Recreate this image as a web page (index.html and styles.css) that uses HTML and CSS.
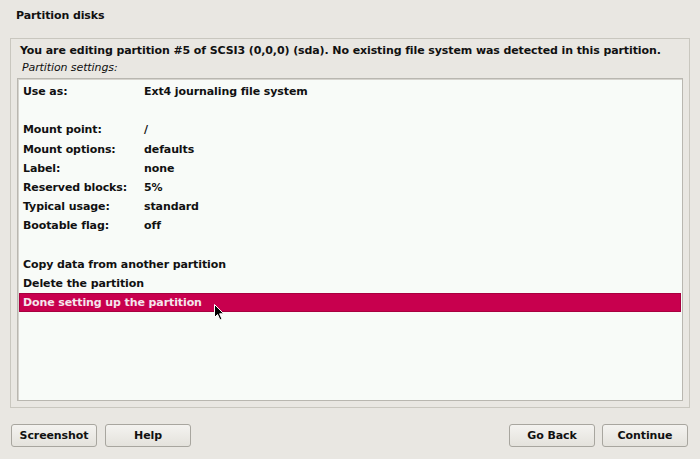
FILE: index.html
```html
<!DOCTYPE html>
<html>
<head>
<meta charset="utf-8">
<link rel="stylesheet" href="styles.css">
</head>
<body>
<div class="app">
  <div class="title">Partition disks</div>
  <div class="frame">
    <div class="question">You are editing partition #5 of SCSI3 (0,0,0) (sda). No existing file system was detected in this partition.</div>
    <div class="subtitle">Partition settings:</div>
    <div class="list">
      <div class="row"><span class="key">Use as:</span><span>Ext4 journaling file system</span></div>
      <div class="row"></div>
      <div class="row"><span class="key">Mount point:</span><span>/</span></div>
      <div class="row"><span class="key">Mount options:</span><span>defaults</span></div>
      <div class="row"><span class="key">Label:</span><span>none</span></div>
      <div class="row"><span class="key">Reserved blocks:</span><span>5%</span></div>
      <div class="row"><span class="key">Typical usage:</span><span>standard</span></div>
      <div class="row"><span class="key">Bootable flag:</span><span>off</span></div>
      <div class="row"></div>
      <div class="row">Copy data from another partition</div>
      <div class="row">Delete the partition</div>
      <div class="row selected">Done setting up the partition
        <svg class="cursor" width="12" height="18" viewBox="0 0 12 18"><path d="M0.5 0.5 L0.5 13.5 L3.5 10.5 L6 16 L8 15 L5.6 9.8 L9.8 9.8 Z" fill="#000" stroke="#fff" stroke-width="1"/></svg>
      </div>
    </div>
  </div>
  <div class="buttons">
    <div class="left">
      <button class="btn">Screenshot</button>
      <button class="btn">Help</button>
    </div>
    <div class="right">
      <button class="btn">Go Back</button>
      <button class="btn">Continue</button>
    </div>
  </div>
</div>
</body>
</html>
```
FILE: styles.css
```css
html, body {
  margin: 0;
  padding: 0;
  background: #e9e7e2;
}
body {
  font-family: "DejaVu Sans", sans-serif;
  font-size: 11px;
  font-weight: bold;
  letter-spacing: -0.1px;
  color: #111;
}
.app {
  width: 700px;
  height: 459px;
  display: flex;
  flex-direction: column;
}
.title {
  padding: 9px 0 0 16px;
  height: 30px;
  box-sizing: border-box;
}
.frame {
  margin: 8px 10px 0 10px;
  height: 370px;
  box-sizing: border-box;
  border: 1px solid #c9c7bf;
  padding: 2px 6px 6px 6px;
  display: flex;
  flex-direction: column;
}
.question {
  padding-left: 3px;
  height: 19px;
  line-height: 19px;
}
.subtitle {
  font-weight: normal;
  font-style: italic;
  padding-left: 5px;
  height: 18px;
  line-height: 15px;
}
.list {
  flex: 1;
  background: #f8fbf8;
  border: 1px solid #b9b7b0;
  box-shadow: inset 1px 1px 0 #d6d4ce;
  padding-top: 3px;
  position: relative;
}
.row {
  height: 19.2px;
  line-height: 19px;
  padding-left: 4px;
  display: flex;
  position: relative;
  margin-left: 1px;
  margin-right: 1px;
}
.key {
  width: 121px;
}
.selected {
  background: #c8004e;
  color: #f5e6ec;
  box-shadow: inset 0 0 0 1px #a8003f;
}
.cursor {
  position: absolute;
  left: 195px;
  top: 11px;
}
.buttons {
  display: flex;
  justify-content: space-between;
  padding: 16px 12px 0 11px;
}
.left, .right {
  display: flex;
  gap: 8px;
}
.right { gap: 7px; }
.btn {
  width: 86px;
  height: 23px;
  font-family: "DejaVu Sans", sans-serif;
  font-size: 11px;
  font-weight: bold;
  letter-spacing: -0.1px;
  color: #111;
  background: linear-gradient(#f4f3f0, #e4e2dc);
  border: 1px solid #a8a69f;
  border-radius: 3px;
  padding: 0;
}
```
